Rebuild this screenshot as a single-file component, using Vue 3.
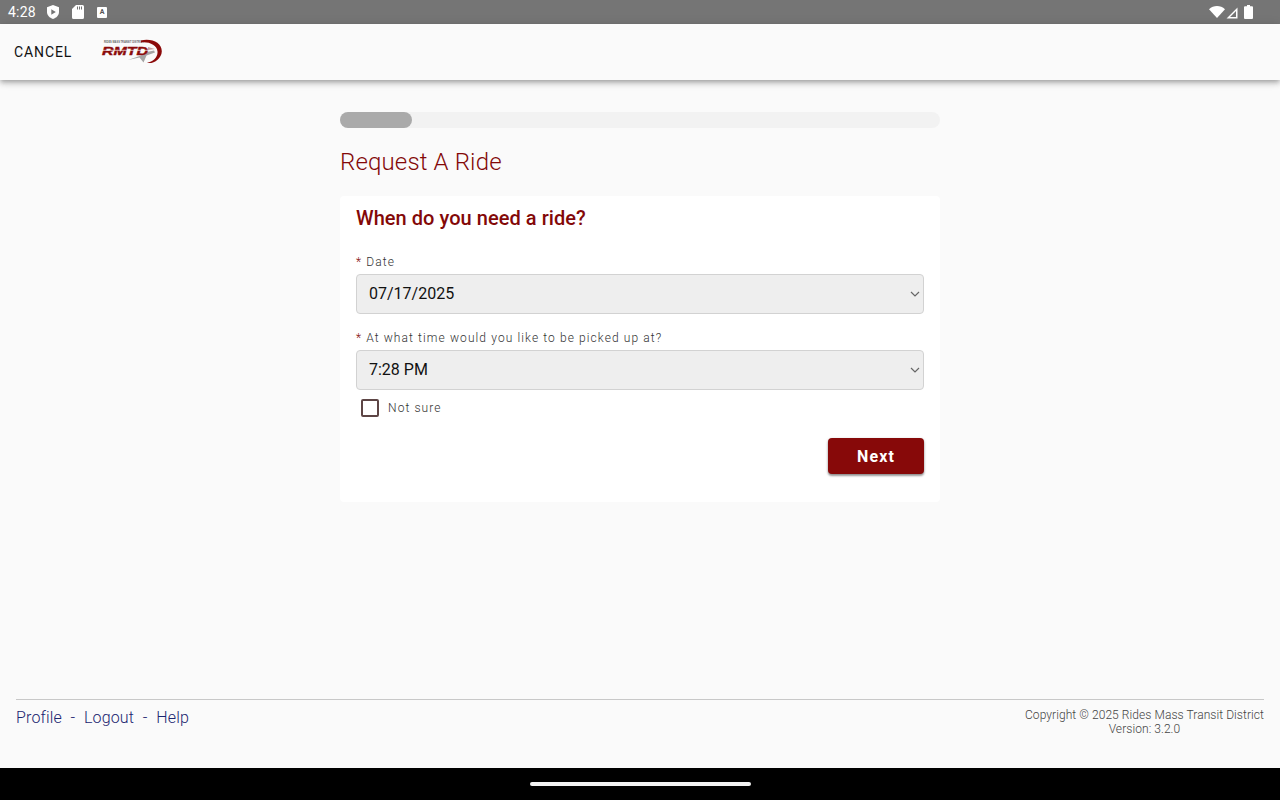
<script setup>
const fields = [
  { label: 'Date', value: '07/17/2025' },
  { label: 'At what time would you like to be picked up at?', value: '7:28 PM' }
]
</script>

<template>
  <div class="screen">
    <div class="status">
      <span class="clock">4:28</span>
      <svg class="si" width="14" height="16" viewBox="0 0 14 16"><path d="M7 1 13 3.200V8c0 3.300-2.500 5.800-6 7C3.500 13.800 1 11.300 1 8V3.200Z" fill="#fff"/><path d="M5.300 5.200 9.800 8 5.300 10.800Z" fill="#757575"/></svg>
      <svg class="si sd" width="12" height="14" viewBox="0 0 12 14"><path d="M4 0h6.500A1.500 1.500 0 0 1 12 1.500v11a1.500 1.500 0 0 1-1.500 1.500h-9A1.500 1.500 0 0 1 0 12.500V4Z" fill="#fff"/><path d="M5 1.500h1v3H5zM7 1.500h1v3H7zM9 1.500h1v3H9z" fill="#757575"/></svg>
      <span class="abox">A</span>
      <span class="grow"></span>
      <svg class="wifi" width="16" height="12" viewBox="0 0 16 12"><path d="M0 3.200C4.500-1 11.500-1 16 3.200L8 12Z" fill="#fff"/></svg>
      <svg class="signal" width="12" height="12" viewBox="0 0 12 12"><path d="M11.500.5v11H.5ZM10 4 4 10h6Z" fill="#fff" fill-rule="evenodd"/></svg>
      <svg class="batt" width="9" height="14" viewBox="0 0 9 14"><path d="M3 0h3v1.200h2a1 1 0 0 1 1 1V13a1 1 0 0 1-1 1H1a1 1 0 0 1-1-1V2.200a1 1 0 0 1 1-1h2Z" fill="#fff"/></svg>
    </div>

    <header class="topbar">
      <span class="cancel">CANCEL</span>
      <svg class="logo" width="62" height="26" viewBox="0 0 62 26">
        <path d="M27 21 40 16.500 46 13 53 11.500 54 13.500 45.500 16.500 42.500 23.500 38.500 18.500Z" fill="#a5a5a5"/>
        <path d="M47 8 54 10 47 11Z" fill="#c9a0a0"/>
        <text x="3" y="4.200" class="logo-small" textLength="40" lengthAdjust="spacingAndGlyphs">RIDES MASS TRANSIT DISTRICT</text>
        <text x="1" y="15.500" class="logo-text" textLength="46" lengthAdjust="spacingAndGlyphs">RMTD</text>
        <path d="M0 11.300H47" stroke="#fafafa" stroke-width="0.700"/>
        <path d="M40 1.500C51 -1 61 4 60.800 12.500C60.500 20 52 25.500 46 23.800C52 23 57 18 56.500 12.500C56 6 48 2.500 40 3.500Z" fill="#8b0a0a"/>
      </svg>
    </header>

    <main class="content">
      <div class="progress"><div class="progress-fill"></div></div>
      <h1 class="title">Request A Ride</h1>

      <section class="card">
        <h2 class="question">When do you need a ride?</h2>
        <div v-for="f in fields" :key="f.label" class="field">
          <div class="label"><span class="req">*</span> {{ f.label }}</div>
          <div class="select">
            <span class="value">{{ f.value }}</span>
            <svg width="10" height="6" viewBox="0 0 10 6"><path d="M1 1 5 5 9 1" fill="none" stroke="#666" stroke-width="1.200"/></svg>
          </div>
        </div>
        <div class="check-row">
          <span class="check"></span>
          <span class="check-label">Not sure</span>
        </div>
        <div class="actions"><button class="next">Next</button></div>
      </section>
    </main>

    <footer class="footer">
      <div class="links">
        <a>Profile</a><span class="dash">-</span><a>Logout</a><span class="dash">-</span><a>Help</a>
      </div>
      <div class="copy">
        <div>Copyright © 2025 Rides Mass Transit District</div>
        <div class="version">Version: 3.2.0</div>
      </div>
    </footer>

    <div class="navbar"><span class="pill"></span></div>
  </div>
</template>

<style>
html, body { margin: 0; background: #fafafa; }
</style>

<style scoped>
.screen {
  width: 1280px;
  height: 800px;
  display: flex;
  flex-direction: column;
  background: #fafafa;
  font-family: Roboto, "Liberation Sans", sans-serif;
  overflow: hidden;
}
.status {
  height: 24px;
  flex: none;
  background: #757575;
  display: flex;
  align-items: center;
  padding: 0 27px 0 8px;
  box-sizing: border-box;
  color: #fff;
}
.clock { font-size: 14px; letter-spacing: 0.2px; width: 38px; }
.si { flex: none; }
.sd { margin-left: 12px; }
.abox {
  margin-left: 13px;
  margin-top: 1px;
  width: 10px;
  height: 11px;
  background: #fff;
  color: #555;
  border-radius: 1px;
  font-size: 7px;
  font-weight: 700;
  line-height: 11px;
  text-align: center;
}
.grow { flex: 1; }
.wifi { margin-bottom: 1px; }
.signal { margin-left: 1px; margin-top: 1px; }
.batt { margin-left: 6px; }

.topbar {
  height: 56px;
  flex: none;
  background: #fafafa;
  display: flex;
  align-items: center;
  padding-left: 14px;
  box-shadow: 0 2px 4px -1px rgba(0,0,0,.2), 0 4px 5px 0 rgba(0,0,0,.14), 0 1px 10px 0 rgba(0,0,0,.12);
  position: relative;
  z-index: 1;
}
.cancel { font-size: 14px; letter-spacing: 0.9px; color: #111; width: 87px; }
.logo { flex: none; }
.logo-small { font: 700 3px "Liberation Sans", sans-serif; fill: #666; }
.logo-text { font: italic 700 11.500px "Liberation Sans", sans-serif; fill: #8b0a0a; stroke: #8b0a0a; stroke-width: 0.400px; }

.content {
  flex: 1;
  width: 600px;
  margin: 0 auto;
  padding-top: 32px;
  box-sizing: border-box;
}
.progress { height: 16px; border-radius: 8px; background: #f2f2f2; }
.progress-fill { width: 72px; height: 16px; border-radius: 8px; background: #aaa; }
.title {
  margin: 18px 0 0;
  font-size: 24px;
  line-height: 32px;
  font-weight: 300;
  letter-spacing: 0.15px;
  color: #830808;
}
.card {
  margin-top: 18px;
  background: #fff;
  border-radius: 4px;
  height: 306px;
  box-sizing: border-box;
  padding: 9px 16px 0;
}
.question {
  margin: 0 0 23px;
  font-size: 20px;
  line-height: 26px;
  font-weight: 500;
  letter-spacing: 0.05px;
  color: #830808;
}
.field { margin-bottom: 16px; }
.field:nth-of-type(2) { margin-bottom: 0; }
.label {
  font-size: 12px;
  line-height: 16px;
  letter-spacing: 1.1px;
  font-weight: 300;
  color: #333;
  margin-bottom: 4px;
}
.req { color: #830808; }
.select {
  height: 40px;
  box-sizing: border-box;
  border: 1px solid #d2d2d2;
  border-radius: 4px;
  background: #eee;
  display: flex;
  align-items: center;
  justify-content: space-between;
  padding: 0 3px 0 12px;
  font-size: 16px;
  color: #111;
}
.value { padding-bottom: 2px; }
.check-row {
  display: flex;
  align-items: center;
  height: 20px;
  margin-top: 8px;
  padding-left: 5px;
}
.check {
  width: 18px;
  height: 18px;
  box-sizing: border-box;
  border: 2px solid #5d4545;
  border-radius: 2px;
}
.check-label {
  margin-left: 9px;
  font-size: 12px;
  letter-spacing: 1.1px;
  font-weight: 300;
  color: #333;
}
.actions { display: flex; justify-content: flex-end; margin-top: 20px; }
.next {
  width: 96px;
  height: 36px;
  border: 0;
  border-radius: 4px;
  background: #870909;
  color: #fff;
  font-family: inherit;
  font-size: 16px;
  font-weight: 700;
  letter-spacing: 1.1px;
  box-shadow: 0 2px 2px rgba(0,0,0,.3), 0 1px 3px rgba(0,0,0,.25);
}

.footer {
  flex: none;
  height: 69px;
  box-sizing: border-box;
  margin: 0 16px;
  border-top: 1px solid #c8c8c8;
  display: flex;
  justify-content: space-between;
  align-items: flex-start;
}
.links {
  padding-top: 9px;
  font-size: 16px;
  line-height: 18px;
  font-weight: 300;
  color: #1a2570;
  letter-spacing: 0.15px;
}
.dash { margin: 0 8.700px; }
.copy {
  padding-top: 8px;
  font-size: 12px;
  line-height: 14px;
  font-weight: 300;
  letter-spacing: 0.07px;
  color: #444;
  text-align: right;
}
.version { text-align: center; }
.navbar {
  height: 32px;
  flex: none;
  background: #000;
  display: flex;
  align-items: center;
  justify-content: center;
}
.pill { width: 221px; height: 4px; border-radius: 2px; background: #f2f2f2; }
</style>
